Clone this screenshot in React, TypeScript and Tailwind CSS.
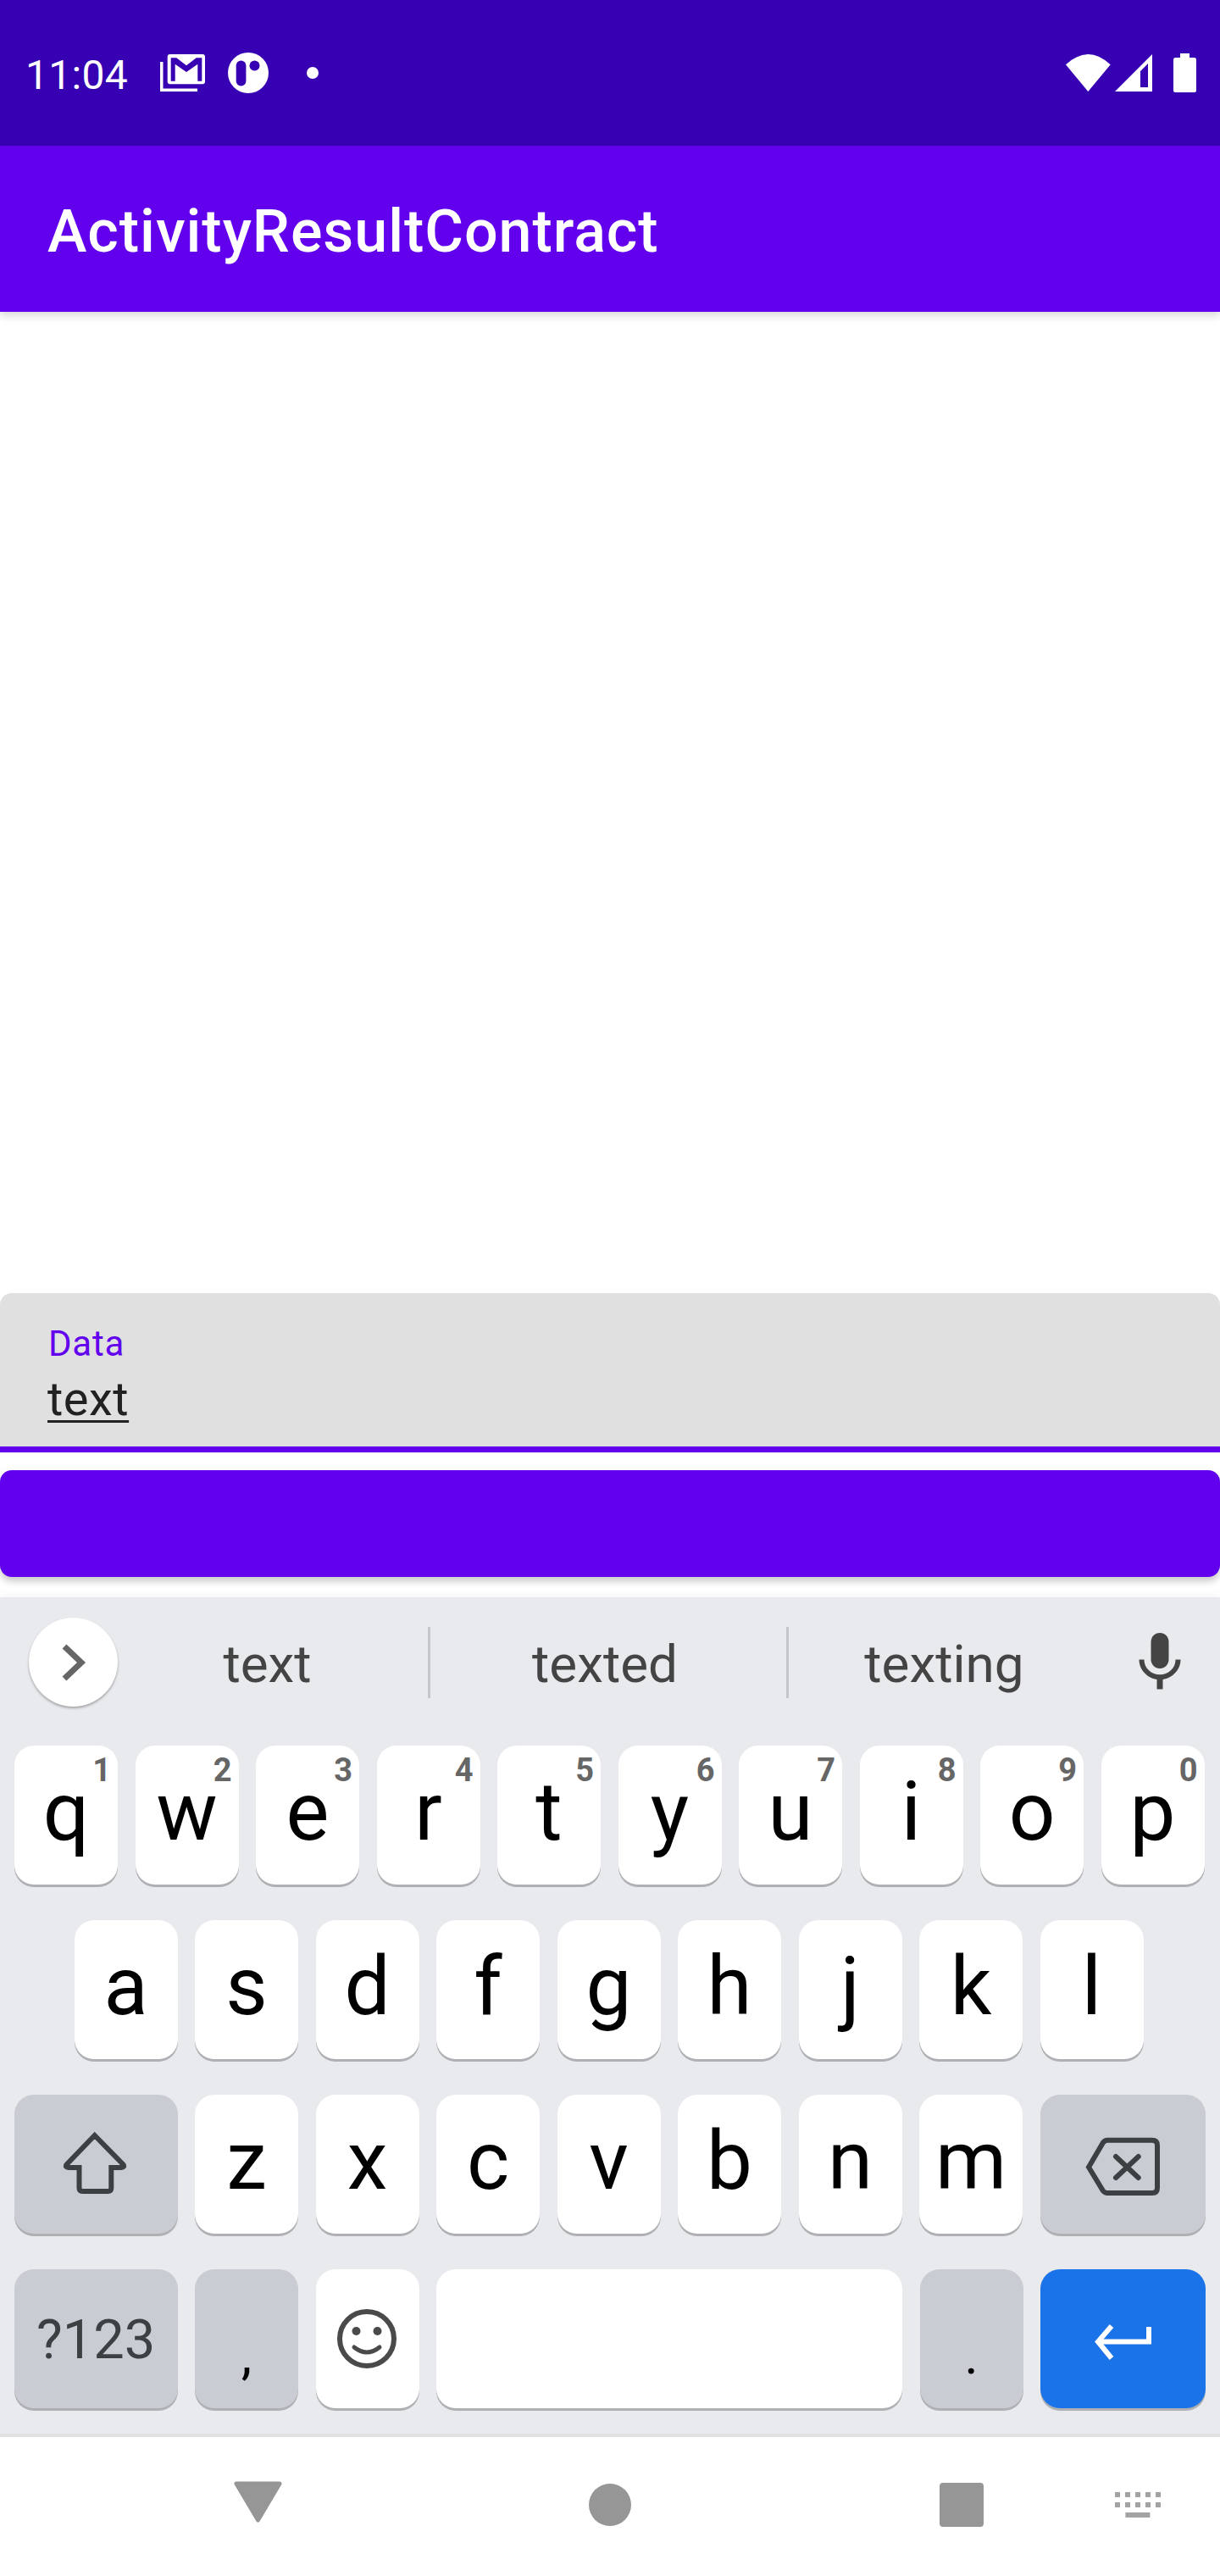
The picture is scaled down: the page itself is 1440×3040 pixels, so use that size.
import type { ReactNode } from "react";

const topRow = [
  ["q", "1"],
  ["w", "2"],
  ["e", "3"],
  ["r", "4"],
  ["t", "5"],
  ["y", "6"],
  ["u", "7"],
  ["i", "8"],
  ["o", "9"],
  ["p", "0"],
];
const middleRow = ["a", "s", "d", "f", "g", "h", "j", "k", "l"];
const bottomRow = ["z", "x", "c", "v", "b", "n", "m"];

function StatusBar() {
  return (
    <div className="flex h-[172px] shrink-0 items-center bg-[#3700b3] pl-[30px] pr-[28px] text-white">
      <span className="pt-[5px] text-[48px] leading-none tracking-[0.3px]">11:04</span>

      {/* gmail */}
      <svg className="ml-[38px]" width="53" height="44" viewBox="0 0 53 44">
        <path d="M1.75 9V42.2H44" fill="none" stroke="#fff" strokeWidth="3.5" />
        <rect x="8.7" y="0" width="44.3" height="35.3" rx="3" fill="#fff" />
        <polygon
          points="12.7,4.3 19.3,4.3 31,13.3 42.7,4.3 49.3,4.3 49.3,31.7 44.3,31.7 44.3,11.7 31,21 17.7,11.7 17.7,31.7 12.7,31.7"
          fill="#3700b3"
        />
      </svg>

      {/* second notification */}
      <svg className="ml-[27px]" width="48" height="48" viewBox="0 0 48 48">
        <circle cx="24" cy="24" r="24" fill="#fff" />
        <rect x="9.7" y="9.5" width="11.7" height="30" rx="5.8" fill="#3700b3" />
        <circle cx="31.5" cy="15.5" r="6" fill="#3700b3" />
      </svg>

      <div className="ml-[45px] h-[14px] w-[14px] rounded-full bg-white" />

      <div className="ml-auto flex items-center">
        <svg width="53" height="44" viewBox="0 0 53 44">
          <path d="M0 12.3Q26.3 -12.3 52.7 12.3L26.3 44Z" fill="#fff" />
        </svg>
        <svg className="ml-[5px]" width="44" height="44" viewBox="0 0 44 44">
          <path d="M0 44L44 0V44Z M39 11L30 20V39H39Z" fill="#fff" fillRule="evenodd" />
        </svg>
        <svg className="ml-[25px]" width="27" height="46" viewBox="0 0 27 46">
          <rect x="8" y="0" width="11" height="6" fill="#fff" />
          <rect x="0" y="5" width="27" height="41" rx="2.5" fill="#fff" />
        </svg>
      </div>
    </div>
  );
}

function Key({
  children,
  className = "w-[122px] bg-white",
}: {
  children?: ReactNode;
  className?: string;
}) {
  return (
    <div
      className={`relative flex h-[164px] shrink-0 justify-center rounded-[23px] shadow-[0_3px_0_#aeb0b3] ${className}`}
    >
      {children}
    </div>
  );
}

function LetterKey({ label, hint }: { label: string; hint?: string }) {
  return (
    <Key>
      <span className="text-[96px] leading-[156px] text-black">{label}</span>
      {hint && (
        <span className="absolute right-[8px] top-[10px] text-[38px] font-bold leading-none text-[#666666]">
          {hint}
        </span>
      )}
    </Key>
  );
}

function SuggestionStrip() {
  return (
    <div className="flex h-[175px] items-start pl-[34px] pt-[24px]">
      <div className="flex h-[105px] w-[105px] shrink-0 items-center justify-center rounded-full bg-white shadow-[0_2px_3px_rgba(0,0,0,0.3)]">
        <svg width="30" height="44" viewBox="0 0 30 44" className="mt-[1px]">
          <polyline points="4,3 24,22 4,41" fill="none" stroke="#666666" strokeWidth="7" />
        </svg>
      </div>
      <div className="w-[366px] pr-[13px] text-center text-[62px] leading-[110px] text-[#444444]">text</div>
      <div className="mt-[11px] h-[84px] w-[3px] shrink-0 bg-[#c4c6ca]" />
      <div className="w-[420px] pr-[8px] text-center text-[62px] leading-[110px] text-[#444444]">texted</div>
      <div className="mt-[11px] h-[84px] w-[3px] shrink-0 bg-[#c4c6ca]" />
      <div className="w-[367px] text-center text-[62px] leading-[110px] text-[#444444]">texting</div>
      <div className="flex w-[142px] justify-center pt-[11px]">
        <svg width="84" height="84" viewBox="0 0 24 24" fill="#444444">
          <path d="M12 14c1.66 0 3-1.34 3-3V5c0-1.66-1.34-3-3-3S9 3.34 9 5v6c0 1.66 1.34 3 3 3z" />
          <path d="M17.3 11c0 3-2.54 5.1-5.3 5.1S6.7 14 6.7 11H5c0 3.41 2.72 6.23 6 6.72V21h2v-3.28c3.28-.48 6-3.3 6-6.72h-1.7z" />
        </svg>
      </div>
    </div>
  );
}

function Keyboard() {
  return (
    <div className="h-[991px] shrink-0 border-b-[4px] border-[#e0e1e3] bg-[#e8eaed] shadow-[0_-4px_8px_rgba(0,0,0,0.03)]">
      <SuggestionStrip />
      <div className="flex flex-col gap-[42px]">
        <div className="flex gap-[20.5px] pl-[17px]">
          {topRow.map(([label, hint]) => (
            <LetterKey key={label} label={label} hint={hint} />
          ))}
        </div>
        <div className="flex gap-[20.5px] pl-[87.5px]">
          {middleRow.map((label) => (
            <LetterKey key={label} label={label} />
          ))}
        </div>
        <div className="flex gap-[20.5px] pl-[17px]">
          <Key className="w-[192.5px] items-center bg-[#c9ccd3]">
            <svg className="-ml-[2px]" width="84" height="80" viewBox="0 0 84 80">
              <path
                d="M41.7 6L8.5 40.5Q6.5 44 11 44H23.5V68Q23.5 72 27.5 72H57.5Q61.3 72 61.3 68V44H73Q77.5 44 75.5 40.5Z"
                fill="none"
                stroke="#3c4043"
                strokeWidth="6"
              />
            </svg>
          </Key>
          {bottomRow.map((label) => (
            <LetterKey key={label} label={label} />
          ))}
          <Key className="w-[195px] items-center bg-[#c9ccd3]">
            <svg className="mt-[6px]" width="96" height="78" viewBox="0 0 96 78" fill="none" stroke="#3c4043" strokeWidth="6">
              <path d="M8 39.5L25 10.5Q27 7.7 30 7.7H83Q89 7.7 89 13.7V64Q89 70 83 70H30Q27 70 25 67.5Z" />
              <path d="M40 27L66.7 52M66.7 27L40 52" strokeLinecap="round" />
            </svg>
          </Key>
        </div>
        <div className="flex gap-[20.5px] pl-[17px]">
          <Key className="w-[192.5px] bg-[#c9ccd3]">
            <span className="text-[65px] leading-[167px] text-[#3c4043]">?123</span>
          </Key>
          <Key className="w-[122px] bg-[#c9ccd3]">
            <span className="text-[63px] leading-[203px] text-black">,</span>
          </Key>
          <Key className="w-[122px] items-center bg-white">
            <svg className="-ml-[2px]" width="70" height="70" viewBox="0 0 70 70">
              <circle cx="35" cy="35" r="32" fill="none" stroke="#4a4a4a" strokeWidth="6" />
              <circle cx="22.5" cy="26" r="5" fill="#4a4a4a" />
              <circle cx="47.5" cy="26" r="5" fill="#4a4a4a" />
              <path d="M20 45Q35 57 50 45" fill="none" stroke="#4a4a4a" strokeWidth="5" strokeLinecap="round" />
            </svg>
          </Key>
          <Key className="w-[550px] bg-white" />
          <Key className="w-[122px] bg-[#c9ccd3]">
            <span className="text-[63px] leading-[203px] text-black">.</span>
          </Key>
          <Key className="w-[195px] items-center bg-[#1a73e8]">
            <svg className="mt-[10px]" width="72" height="50" viewBox="0 0 72 50" fill="none" stroke="#fff" strokeWidth="6">
              <path d="M66 6V23.5H6" />
              <path d="M22 5L6 23.5L22 43" />
            </svg>
          </Key>
        </div>
      </div>
    </div>
  );
}

function NavBar() {
  return (
    <div className="flex h-[164px] shrink-0 items-center bg-white pb-[4px] pl-[275.5px]">
      <svg className="-mt-[7px]" width="57" height="49" viewBox="0 0 57 49">
        <polygon points="3,3 54,3 28.5,46" fill="#969696" stroke="#969696" strokeWidth="5" strokeLinejoin="round" />
      </svg>
      <div className="ml-[362.5px] h-[50px] w-[50px] rounded-full bg-[#969696]" />
      <div className="ml-[363.5px] h-[52px] w-[52px] rounded-[4px] bg-[#969696]" />
      <svg className="ml-[155.5px]" width="54" height="30" viewBox="0 0 54 30" fill="#a3a3a3">
        <rect x="0" y="0" width="6" height="6" />
        <rect x="12" y="0" width="6" height="6" />
        <rect x="24" y="0" width="6" height="6" />
        <rect x="36" y="0" width="6" height="6" />
        <rect x="48" y="0" width="6" height="6" />
        <rect x="0" y="12" width="6" height="6" />
        <rect x="12" y="12" width="6" height="6" />
        <rect x="24" y="12" width="6" height="6" />
        <rect x="36" y="12" width="6" height="6" />
        <rect x="48" y="12" width="6" height="6" />
        <rect x="12.4" y="24" width="29" height="6" />
      </svg>
    </div>
  );
}

export default function App() {
  return (
    <div className="flex h-[3040px] w-[1440px] flex-col overflow-hidden bg-white font-[Roboto,sans-serif]">
      <StatusBar />

      <header className="relative flex h-[196px] shrink-0 items-center bg-[#6200ee] pl-[56px] pt-[6px] shadow-[0_4px_10px_rgba(0,0,0,0.16)]">
        <h1 className="text-[70px] font-medium leading-none tracking-[0.95px] text-white">ActivityResultContract</h1>
      </header>

      <main className="flex flex-1 flex-col justify-end pb-[24px]">
        <div className="h-[188px] rounded-t-[14px] border-b-[7px] border-[#6200ee] bg-[#e0e0e0] pl-[56px] pt-[39px]">
          <div className="pl-[1px] text-[42px] leading-[42px] tracking-[0.8px] text-[#6200ee]">Data</div>
          <div className="mt-[16px] text-[56px] leading-[56px] tracking-[0.5px] text-[#212121] underline decoration-[3px] underline-offset-[6px]">
            text
          </div>
        </div>
        <button className="mt-[21px] h-[126px] w-full rounded-[14px] bg-[#6200ee] shadow-[0_5px_9px_rgba(0,0,0,0.22)]" />
      </main>

      <Keyboard />
      <NavBar />
    </div>
  );
}
